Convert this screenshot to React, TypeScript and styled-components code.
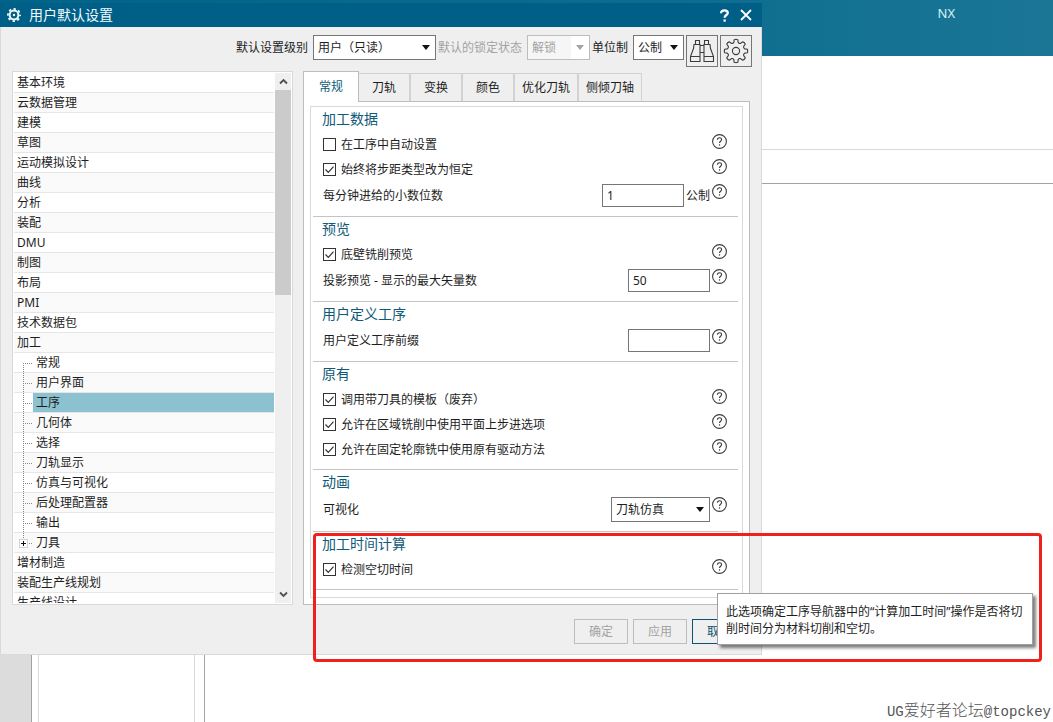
import React, { useState } from 'react';
import styled, { createGlobalStyle, css } from 'styled-components';

const sans = `"Noto Sans", "Noto Sans CJK SC", sans-serif`;

const color = {
  title: '#005f87',
  body: '#efefef',
  line: '#d9d9d9',
  panelLine: '#bdbdbd',
  control: '#767676',
  heading: '#0f5a78',
  text: '#1e1e1e',
  disabled: '#a3a3a3',
  selected: '#8cc1cf',
  mark: '#ee221a',
};

const GlobalStyle = createGlobalStyle`
  *, *::before, *::after { box-sizing: border-box; }
  body { margin: 0; background: #fff; color: ${color.text}; font: 12px/16px ${sans}; }
  button, input, select { font: inherit; color: inherit; margin: 0; border-radius: 0; }
  ul { list-style: none; margin: 0; padding: 0; }
`;

/* ---------- application behind the dialog ---------- */

const Desktop = styled.div`
  position: relative;
  display: flex;
  flex-direction: column;
  min-height: 100vh;
  overflow: hidden;
`;

const Banner = styled.header`
  height: 56px;
  padding: 5px 98px 0 0;
  background: linear-gradient(90deg, #006488 0%, #0d6d8e 65%, #1b7696 100%);
  color: #d8f0f6;
  font-size: 13px;
  text-align: right;
`;

const Ribbon = styled.div`
  height: 94px;
  border-bottom: 1px solid ${color.line};
`;

const Strip = styled.div`
  height: 34px;
  border-bottom: 1px solid #a3a3a3;
`;

const Workspace = styled.div`
  flex: 1;
  display: flex;
`;

const ResourceBar = styled.div`
  width: 32px;
  margin-right: 6px;
  background: #dcdcdc;
  border-right: 1px solid #a3a3a3;
`;

const Navigator = styled.div`
  width: 157px;
  margin-right: 9px;
  border: solid ${color.line};
  border-width: 0 1px;
`;

const Viewport = styled.div`
  flex: 1;
  display: flex;
  justify-content: flex-end;
  align-items: flex-end;
  border-left: 1px solid #a3a3a3;
`;

const Watermark = styled.p`
  margin: 0 2px 0 0;
  font: 16px/20px "Noto Sans CJK SC", sans-serif;
  font-weight: 300;
  color: #555;
`;

const Latin = styled.span`
  font: 14px/20px "Liberation Mono", monospace;
`;

/* ---------- dialog ---------- */

const Dialog = styled.section`
  position: absolute;
  top: 3px;
  left: 0;
  width: 762px;
  max-width: 100%;
  display: flex;
  flex-direction: column;
`;

const TitleBar = styled.header`
  display: flex;
  align-items: center;
  height: 24px;
  padding: 0 5px 0 7px;
  background: ${color.title};
  color: #f2fbff;
`;

const Title = styled.h1`
  flex: 1;
  margin: 0 0 0 8px;
  font-size: 14px;
  line-height: 20px;
  font-weight: 400;
`;

const TitleButton = styled.button`
  display: grid;
  place-items: center;
  width: 22px;
  height: 20px;
  padding: 0;
  border: 0;
  background: none;
  color: #fff;
`;

const DialogBody = styled.div`
  display: flex;
  flex-direction: column;
  background: ${color.body};
  border: solid ${color.line};
  border-width: 0 1px 1px;
`;

const Toolbar = styled.div`
  display: flex;
  justify-content: flex-end;
  align-items: flex-start;
  gap: 2px;
  height: 44px;
  padding: 8px 9px 0 0;
`;

const ToolLabel = styled.label<{ $muted?: boolean }>`
  padding-right: 3px;
  line-height: 25px;
  color: ${(p) => (p.$muted ? color.disabled : color.text)};
`;

const IconButton = styled.button`
  display: grid;
  place-items: center;
  width: 32px;
  height: 32px;
  padding: 0;
  background: ${color.body};
  border: 1px solid ${color.control};
`;

const SelectBox = styled.span<{ $width: number; $muted?: boolean }>`
  display: grid;
  width: ${(p) => p.$width}px;
  height: 25px;
  align-items: center;
  background: #fff;
  border: 1px solid ${(p) => (p.$muted ? '#bdbdbd' : color.control)};
  color: ${(p) => (p.$muted ? color.disabled : color.text)};

  > * { grid-area: 1 / 1; }
  > svg { justify-self: end; margin-right: 5px; pointer-events: none; }
`;

const Select = styled.select`
  appearance: none;
  width: 100%;
  height: 23px;
  padding: 0 0 0 4px;
  border: 0;
  background: none;
  &:disabled {
    opacity: 1;
    background: linear-gradient(90deg, #f6f6f6 70%, #fff 70%);
  }
`;

const Columns = styled.div`
  display: flex;
  gap: 10px;
  padding: 0 11px;
`;

/* ---------- category tree ---------- */

const TreeBox = styled.nav`
  display: flex;
  width: 281px;
  contain: size;
  overflow: hidden;
  padding: 1px;
  background: #fff;
  border: 1px solid ${color.line};
`;

const TreeList = styled.ul`
  flex: 1;
  overflow: hidden;
`;

const TreeRow = styled.li<{ $child?: boolean }>`
  display: flex;
  height: 20px;
  padding-left: ${(p) => (p.$child ? 5 : 0)}px;
  border-bottom: 1px solid #e6e6e6;
  &:nth-child(even) { background: #fafafa; }
`;

const TreeLink = styled.a<{ $selected?: boolean }>`
  flex: 1;
  padding-left: 3px;
  line-height: 19px;
  color: inherit;
  text-decoration: none;
  ${(p) => p.$selected && css`background: ${color.selected};`}
`;

const ScrollTrack = styled.div`
  display: flex;
  flex-direction: column;
  justify-content: space-between;
  width: 16px;
  margin-left: 1px;
  background: ${color.body};
`;

const ScrollButton = styled.button`
  display: grid;
  place-items: center;
  width: 16px;
  height: 17px;
  padding: 0;
  border: 0;
  background: none;
`;

const ScrollThumb = styled.div`
  height: 205px;
  margin-bottom: auto;
  background: #cbcbcb;
`;

/* ---------- tabbed settings ---------- */

const Settings = styled.div`
  flex: 1;
  min-width: 0;
`;

const TabList = styled.div`
  display: flex;
  align-items: flex-end;
`;

const Tab = styled.button<{ $active?: boolean }>`
  min-width: 52px;
  height: 28px;
  padding: 0 7px;
  white-space: nowrap;
  background: ${color.body};
  border: 1px solid #d2d2d2;
  border-bottom: 0;
  ${(p) =>
    p.$active &&
    css`
      position: relative;
      width: 56px;
      height: 31px;
      margin-bottom: -1px;
      margin-right: -1px;
      background: #fff;
      border-color: ${color.panelLine};
      color: ${color.heading};
    `}
`;

const TabPanel = styled.div`
  padding: 4px 6px 6px;
  background: #fff;
  border: 1px solid ${color.panelLine};
`;

const Frame = styled.div`
  padding: 0 4px 7px 2px;
  border: 1px solid ${color.line};
`;

const Section = styled.section`
  padding: 0 11px 7px 9px;
  border-bottom: 1px solid #c4c4c4;
`;

const SectionTitle = styled.h2`
  margin: 0;
  padding-bottom: 2px;
  font-size: 14px;
  line-height: 23px;
  font-weight: 400;
  color: ${color.heading};
`;

const Row = styled.div<{ $height: number }>`
  display: flex;
  align-items: center;
  height: ${(p) => p.$height}px;
  padding-left: 1px;
`;

const FieldLabel = styled.label`
  margin-right: auto;
`;

const CheckLabel = styled.label`
  display: flex;
  align-items: center;
  gap: 5px;
  margin-right: auto;
`;

const CheckMark = styled.span`
  display: grid;
  width: 13px;
  height: 13px;
  > * { grid-area: 1 / 1; }
  > svg { pointer-events: none; }
`;

const CheckInput = styled.input`
  appearance: none;
  width: 13px;
  height: 13px;
  background: #fff;
  border: 1px solid #333;
`;

const TextInput = styled.input`
  width: 82px;
  height: 23px;
  padding: 0 4px;
  background: #fff;
  border: 1px solid ${color.control};
`;

const Unit = styled.span`
  margin-left: 2px;
`;

const HelpButton = styled.button`
  align-self: flex-start;
  width: 15px;
  height: 15px;
  margin: 2px 0 0 2px;
  padding: 0;
  border: 0;
  background: none;
  > svg { display: block; }
`;

const Footer = styled.footer`
  display: flex;
  justify-content: flex-end;
  gap: 5px;
  padding: 14px 15px 10px;
`;

const FooterButton = styled.button<{ $primary?: boolean }>`
  width: 54px;
  height: 25px;
  padding: 0;
  background: ${color.body};
  border: 1px solid ${(p) => (p.$primary ? '#0b5573' : '#bdbdbd')};
  color: ${(p) => (p.$primary ? '#0b5573' : '#a3a3a3')};
`;

/* ---------- overlays ---------- */

const Tooltip = styled.div`
  position: absolute;
  top: 593px;
  left: 717px;
  padding: 9px 9px 7px 8px;
  white-space: nowrap;
  line-height: 17px;
  background: #fff;
  border: 1px solid #a0a0a0;
  box-shadow: 3px 3px 3px rgba(0, 0, 0, 0.5);
`;

const Highlight = styled.div`
  position: absolute;
  top: 533px;
  left: 313px;
  width: 729px;
  height: 129px;
  border: 3px solid ${color.mark};
  border-radius: 4px;
  pointer-events: none;
`;

/* ---------- icons ---------- */

const TitleGear = () => (
  <svg width="14" height="14" viewBox="0 0 14 14" fill="none" stroke="currentColor">
    <circle cx="7" cy="7" r="4.4" strokeWidth="2" />
    <circle cx="7" cy="7" r="6.1" strokeWidth="1.7" strokeDasharray="2.4 2.39" strokeDashoffset="1.2" />
    <circle cx="7" cy="7" r="1.2" fill="currentColor" stroke="none" />
  </svg>
);

const QuestionGlyph = () => (
  <svg width="11" height="13" viewBox="0 0 11 13" fill="none" stroke="currentColor" strokeWidth="2.2">
    <path d="M2 4.2C2 2.3 3.4 1.4 5.3 1.4S8.8 2.4 8.8 4C8.8 6 5.6 6.1 5.6 8.8" />
    <path d="M5.6 10.4v2.3" />
  </svg>
);

const CloseGlyph = () => (
  <svg width="12" height="12" viewBox="0 0 12 12" fill="none" stroke="currentColor" strokeWidth="1.8">
    <path d="M1 1l10 10M11 1L1 11" />
  </svg>
);

const Binoculars = () => (
  <svg width="26" height="26" viewBox="0 0 26 26" fill="none" stroke="#3c3c3c" strokeWidth="1.1">
    <path d="M6.5 2.5h4v4h-4zM15.5 2.5h4v4h-4z" />
    <path d="M6.5 6.5h-1.5L4.5 10.5 1.5 18.5v5h9.5v-17h-.5M19.5 6.5h1.5l.5 4 3 8v5h-9.5v-17h.5" />
    <path d="M1.5 18.5h9.5M15 18.5h9.5M11 7.5h4M11 14.5h4" />
  </svg>
);

const TEETH = 8;
const gearPath = (() => {
  const at = (r: number, deg: number) => {
    const a = ((deg - 90) * Math.PI) / 180;
    return `${(13 + r * Math.cos(a)).toFixed(2)} ${(13 + r * Math.sin(a)).toFixed(2)}`;
  };
  let d = '';
  for (let i = 0; i < TEETH; i++) {
    const c = (i * 360) / TEETH;
    d += `${i ? 'L' : 'M'}${at(8.9, c - 14)}L${at(11.5, c - 9)}Q${at(12.1, c)} ${at(11.5, c + 9)}L${at(8.9, c + 14)}Q${at(7.8, c + 22.5)} ${at(8.9, c + 31)}`;
  }
  return d + 'Z';
})();

const Gear = () => (
  <svg width="26" height="26" viewBox="0 0 26 26" fill="none" stroke="#3c3c3c" strokeWidth="1.1">
    <path d={gearPath} strokeLinejoin="round" />
    <circle cx="13" cy="13" r="3.6" />
  </svg>
);

const Caret = ({ fill = '#111' }: { fill?: string }) => (
  <svg width="8" height="5" viewBox="0 0 8 5">
    <path d="M0 0h8L4 5z" fill={fill} />
  </svg>
);

const Chevron = ({ down }: { down?: boolean }) => (
  <svg width="9" height="7" viewBox="0 0 9 7" fill="none" stroke="#505050" strokeWidth="1.8">
    <path d={down ? 'M1 1.5l3.5 3.5L8 1.5' : 'M1 5.5L4.5 2 8 5.5'} />
  </svg>
);

const Tick = () => (
  <svg width="13" height="13" viewBox="0 0 13 13" fill="none" stroke="#333" strokeWidth="1.2">
    <path d="M2.5 6.5l2.8 2.9 5.2-5.7" />
  </svg>
);

const HelpIcon = () => (
  <svg width="15" height="15" viewBox="0 0 15 15" fill="none" stroke="#3c3c3c">
    <circle cx="7.5" cy="7.5" r="6.9" strokeWidth="1.1" />
    <path d="M5.4 5.8C5.4 4.3 6.3 3.7 7.5 3.7s2.1.7 2.1 1.9c0 1.6-2.1 1.7-2.1 3.5" strokeWidth="1.1" />
    <path d="M7.5 10.3v1.3" strokeWidth="1.2" />
  </svg>
);

const TreeGuide = ({ kind }: { kind: 'first' | 'middle' | 'expander' }) => (
  <svg width="14" height="20" viewBox="0 0 14 20" fill="none" stroke="#888">
    <path d={kind === 'first' ? 'M4.5 10v10' : kind === 'middle' ? 'M4.5 0v20' : 'M4.5 0v5'} strokeDasharray="1 1" />
    <path d={kind === 'expander' ? 'M10 10.5h3' : 'M6 10.5h7'} strokeDasharray="1 1" />
    {kind === 'expander' && (
      <>
        <rect x="0.5" y="6.5" width="8" height="8" fill="#fff" stroke="#d4d4d4" />
        <path d="M2 10.5h5M4.5 8v5" stroke="#111" />
      </>
    )}
  </svg>
);

/* ---------- composed parts ---------- */

const Help = () => (
  <HelpButton type="button" aria-label="帮助">
    <HelpIcon />
  </HelpButton>
);

const CheckRow = ({ label, initial = true }: { label: string; initial?: boolean }) => {
  const [on, setOn] = useState(initial);
  return (
    <Row $height={25}>
      <CheckLabel>
        <CheckMark>
          <CheckInput type="checkbox" checked={on} onChange={() => setOn(!on)} />
          {on && <Tick />}
        </CheckMark>
        {label}
      </CheckLabel>
      <Help />
    </Row>
  );
};

const InputRow = ({ id, label, value, unit }: { id: string; label: string; value: string; unit?: string }) => (
  <Row $height={27}>
    <FieldLabel htmlFor={id}>{label}</FieldLabel>
    <TextInput id={id} type="text" defaultValue={value} />
    {unit && <Unit>{unit}</Unit>}
    <Help />
  </Row>
);

const DropDown = ({ id, value, width, disabled }: { id: string; value: string; width: number; disabled?: boolean }) => (
  <SelectBox $width={width} $muted={disabled}>
    <Select id={id} disabled={disabled}>
      <option>{value}</option>
    </Select>
    <Caret fill={disabled ? '#a3a3a3' : '#111'} />
  </SelectBox>
);

type Item = { label: string; guide?: 'first' | 'middle' | 'expander' };

const topItems = ['基本环境', '云数据管理', '建模', '草图', '运动模拟设计', '曲线', '分析', '装配', 'DMU', '制图', '布局', 'PMI', '技术数据包', '加工'];
const machiningItems = ['常规', '用户界面', '工序', '几何体', '选择', '刀轨显示', '仿真与可视化', '后处理配置器', '输出', '刀具'];
const lowerItems = ['增材制造', '装配生产线规划', '生产线设计'];

const items: Item[] = [
  ...topItems.map((label) => ({ label })),
  ...machiningItems.map((label, i) => ({
    label,
    guide: (i === 0 ? 'first' : i === machiningItems.length - 1 ? 'expander' : 'middle') as Item['guide'],
  })),
  ...lowerItems.map((label) => ({ label })),
];

const tabs = ['常规', '刀轨', '变换', '颜色', '优化刀轨', '侧倾刀轴'];

export default function App() {
  return (
    <>
      <GlobalStyle />
      <Desktop>
        <Banner>NX</Banner>
        <Ribbon />
        <Strip />
        <Workspace>
          <ResourceBar />
          <Navigator />
          <Viewport>
            <Watermark>
              <Latin>UG</Latin>爱好者论坛<Latin>@topckey</Latin>
            </Watermark>
          </Viewport>
        </Workspace>

        <Dialog role="dialog" aria-labelledby="dialog-title">
          <TitleBar>
            <TitleGear />
            <Title id="dialog-title">用户默认设置</Title>
            <TitleButton type="button" aria-label="帮助"><QuestionGlyph /></TitleButton>
            <TitleButton type="button" aria-label="关闭"><CloseGlyph /></TitleButton>
          </TitleBar>
          <DialogBody>
            <Toolbar>
              <ToolLabel htmlFor="level">默认设置级别</ToolLabel>
              <DropDown id="level" value="用户（只读）" width={123} />
              <ToolLabel htmlFor="lock" $muted>默认的锁定状态</ToolLabel>
              <DropDown id="lock" value="解锁" width={63} disabled />
              <ToolLabel htmlFor="units">单位制</ToolLabel>
              <DropDown id="units" value="公制" width={51} />
              <IconButton type="button" aria-label="查找默认设置"><Binoculars /></IconButton>
              <IconButton type="button" aria-label="管理当前设置"><Gear /></IconButton>
            </Toolbar>

            <Columns>
              <TreeBox aria-label="类别">
                <TreeList>
                  {items.map(({ label, guide }) => (
                    <TreeRow key={label + (guide ?? '')} $child={!!guide}>
                      {guide && <TreeGuide kind={guide} />}
                      <TreeLink href="#" $selected={label === '工序'}>{label}</TreeLink>
                    </TreeRow>
                  ))}
                </TreeList>
                <ScrollTrack>
                  <ScrollButton type="button" aria-label="向上滚动"><Chevron /></ScrollButton>
                  <ScrollThumb />
                  <ScrollButton type="button" aria-label="向下滚动"><Chevron down /></ScrollButton>
                </ScrollTrack>
              </TreeBox>

              <Settings>
                <TabList role="tablist">
                  {tabs.map((name, i) => (
                    <Tab key={name} type="button" role="tab" aria-selected={i === 0} $active={i === 0}>{name}</Tab>
                  ))}
                </TabList>
                <TabPanel role="tabpanel">
                  <Frame>
                    <Section>
                      <SectionTitle>加工数据</SectionTitle>
                      <CheckRow label="在工序中自动设置" initial={false} />
                      <CheckRow label="始终将步距类型改为恒定" />
                      <InputRow id="decimals" label="每分钟进给的小数位数" value="1" unit="公制" />
                    </Section>
                    <Section>
                      <SectionTitle>预览</SectionTitle>
                      <CheckRow label="底壁铣削预览" />
                      <InputRow id="vectors" label="投影预览 - 显示的最大矢量数" value="50" />
                    </Section>
                    <Section>
                      <SectionTitle>用户定义工序</SectionTitle>
                      <InputRow id="prefix" label="用户定义工序前缀" value="" />
                    </Section>
                    <Section>
                      <SectionTitle>原有</SectionTitle>
                      <CheckRow label="调用带刀具的模板（废弃）" />
                      <CheckRow label="允许在区域铣削中使用平面上步进选项" />
                      <CheckRow label="允许在固定轮廓铣中使用原有驱动方法" />
                    </Section>
                    <Section>
                      <SectionTitle>动画</SectionTitle>
                      <Row $height={29}>
                        <FieldLabel htmlFor="visual">可视化</FieldLabel>
                        <DropDown id="visual" value="刀轨仿真" width={99} />
                        <Help />
                      </Row>
                    </Section>
                    <Section>
                      <SectionTitle>加工时间计算</SectionTitle>
                      <CheckRow label="检测空切时间" />
                    </Section>
                  </Frame>
                </TabPanel>
              </Settings>
            </Columns>

            <Footer>
              <FooterButton type="button" disabled>确定</FooterButton>
              <FooterButton type="button" disabled>应用</FooterButton>
              <FooterButton type="button" $primary>取消</FooterButton>
            </Footer>
          </DialogBody>
        </Dialog>

        <Highlight />
        <Tooltip role="tooltip">
          此选项确定工序导航器中的“计算加工时间”操作是否将切
          <br />
          削时间分为材料切削和空切。
        </Tooltip>
      </Desktop>
    </>
  );
}
